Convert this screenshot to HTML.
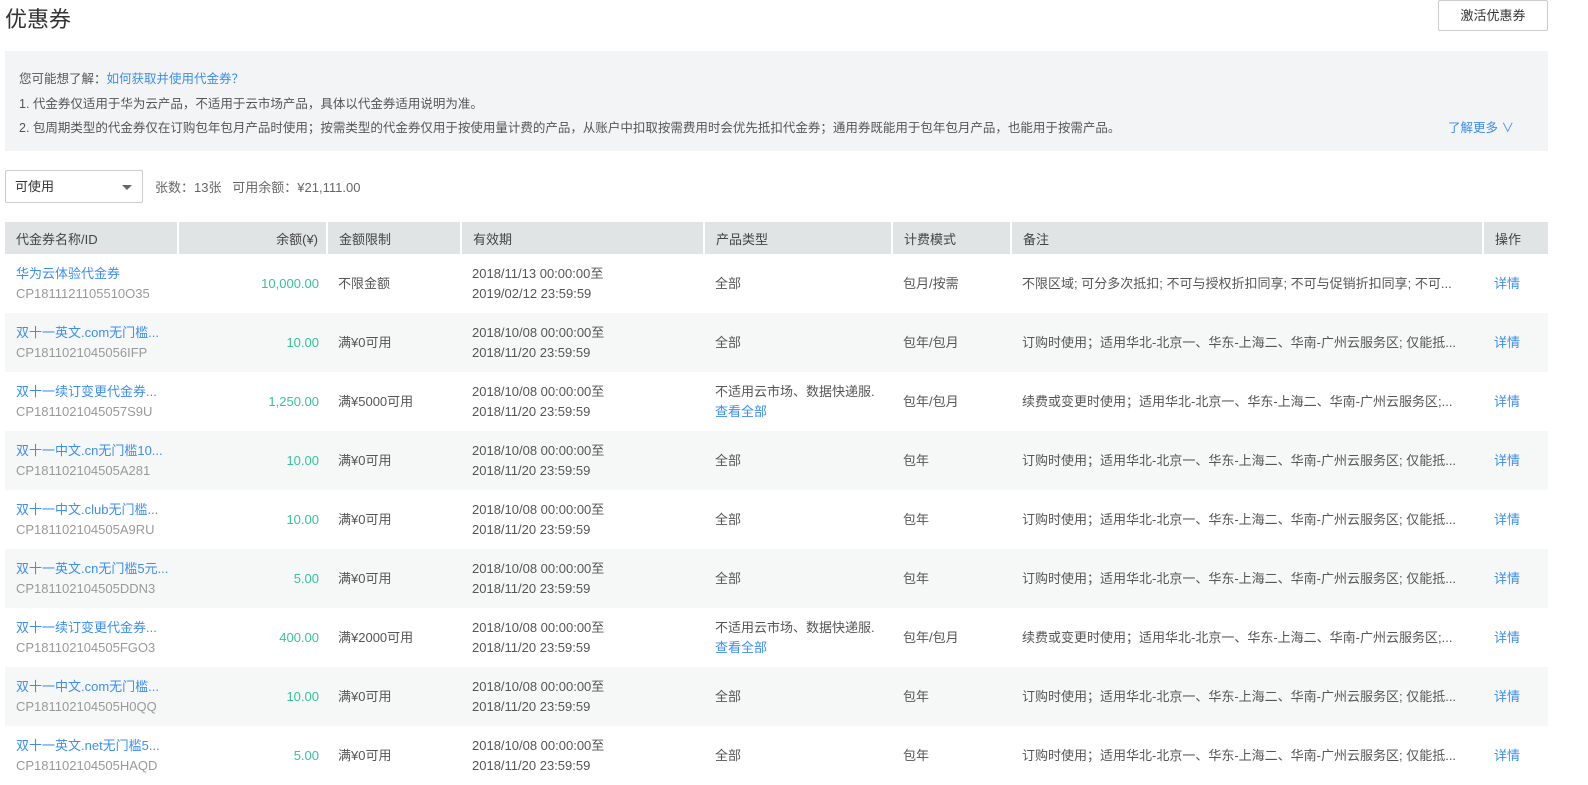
<!DOCTYPE html>
<html style="overflow:hidden"><head><meta charset="utf-8"><style>
*{margin:0;padding:0;box-sizing:border-box}
html,body{width:1588px;height:785px;overflow:hidden}
body{background:#fff;font-family:"Liberation Sans","Noto Sans CJK SC",sans-serif;font-size:13px;color:#555;position:relative}
.title{position:absolute;left:5px;top:2px;font-size:22px;color:#333}
.btn{position:absolute;left:1438px;top:0;width:110px;height:31px;border:1px solid #ccc;border-radius:2px;text-align:center;line-height:30px;color:#333}
.info{position:absolute;left:5px;top:51px;width:1543px;height:100px;background:#f3f4f5}
.info div{position:absolute;left:14px;font-size:12.5px;color:#555}
a{color:#3c8ef0;text-decoration:none}
.sel{position:absolute;left:5px;top:170px;width:138px;height:33px;border:1px solid #ccc;border-radius:2px;padding-left:9px;line-height:31px;color:#333}
.sel:after{content:"";position:absolute;right:10px;top:14px;border:5px solid transparent;border-top-color:#666}
.cnt{position:absolute;left:155px;top:177px;color:#666}
table{position:absolute;left:5px;top:222px;width:1543px;border-collapse:collapse;table-layout:fixed}
th{height:32px;background:#e1e4e5;font-weight:normal;text-align:left;padding-left:11px;color:#444;border-left:2px solid #fff}
th:first-child{border-left:none}
tr.h{height:32px}
tr{height:59px}
td{height:59px;padding-left:11px;line-height:20px;white-space:nowrap;overflow:hidden;color:#555}
tr:nth-child(odd) td{background:#f6f7f7}
.r{text-align:right;padding-right:8px}
.g{color:#36c39c}
.id{color:#999}
</style></head><body>
<div class="title">优惠券</div>
<div class="btn">激活优惠券</div>
<div class="info">
<div style="top:17px">您可能想了解：<a>如何获取并使用代金券？</a></div>
<div style="top:42px">1. 代金券仅适用于华为云产品，不适用于云市场产品，具体以代金券适用说明为准。</div>
<div style="top:66px">2. 包周期类型的代金券仅在订购包年包月产品时使用；按需类型的代金券仅用于按使用量计费的产品，从账户中扣取按需费用时会优先抵扣代金券；通用券既能用于包年包月产品，也能用于按需产品。</div>
<div style="top:66px;left:1443px;color:#3c8ef0">了解更多 ∨</div>
</div>
<div class="sel">可使用</div>
<div class="cnt">张数：13张&nbsp;&nbsp;&nbsp;可用余额：¥21,111.00</div>
<table>
<colgroup><col style="width:173px"><col style="width:149px"><col style="width:134px"><col style="width:243px"><col style="width:188px"><col style="width:119px"><col style="width:472px"><col style="width:65px"></colgroup>
<tr class="h"><th>代金券名称/ID</th><th class="r">余额(¥)</th><th>金额限制</th><th>有效期</th><th>产品类型</th><th>计费模式</th><th>备注</th><th>操作</th></tr>
<tr><td><a>华为云体验代金券</a><br><span class="id">CP1811121105510O35</span></td><td class="r g">10,000.00</td><td>不限金额</td><td>2018/11/13 00:00:00至<br>2019/02/12 23:59:59</td><td>全部</td><td>包月/按需</td><td>不限区域; 可分多次抵扣; 不可与授权折扣同享; 不可与促销折扣同享; 不可...</td><td><a>详情</a></td></tr>
<tr><td><a>双十一英文.com无门槛...</a><br><span class="id">CP1811021045056IFP</span></td><td class="r g">10.00</td><td>满¥0可用</td><td>2018/10/08 00:00:00至<br>2018/11/20 23:59:59</td><td>全部</td><td>包年/包月</td><td>订购时使用；适用华北-北京一、华东-上海二、华南-广州云服务区; 仅能抵...</td><td><a>详情</a></td></tr>
<tr><td><a>双十一续订变更代金券...</a><br><span class="id">CP1811021045057S9U</span></td><td class="r g">1,250.00</td><td>满¥5000可用</td><td>2018/10/08 00:00:00至<br>2018/11/20 23:59:59</td><td>不适用云市场、数据快递服.<br><a>查看全部</a></td><td>包年/包月</td><td>续费或变更时使用；适用华北-北京一、华东-上海二、华南-广州云服务区;...</td><td><a>详情</a></td></tr>
<tr><td><a>双十一中文.cn无门槛10...</a><br><span class="id">CP181102104505A281</span></td><td class="r g">10.00</td><td>满¥0可用</td><td>2018/10/08 00:00:00至<br>2018/11/20 23:59:59</td><td>全部</td><td>包年</td><td>订购时使用；适用华北-北京一、华东-上海二、华南-广州云服务区; 仅能抵...</td><td><a>详情</a></td></tr>
<tr><td><a>双十一中文.club无门槛...</a><br><span class="id">CP181102104505A9RU</span></td><td class="r g">10.00</td><td>满¥0可用</td><td>2018/10/08 00:00:00至<br>2018/11/20 23:59:59</td><td>全部</td><td>包年</td><td>订购时使用；适用华北-北京一、华东-上海二、华南-广州云服务区; 仅能抵...</td><td><a>详情</a></td></tr>
<tr><td><a>双十一英文.cn无门槛5元...</a><br><span class="id">CP181102104505DDN3</span></td><td class="r g">5.00</td><td>满¥0可用</td><td>2018/10/08 00:00:00至<br>2018/11/20 23:59:59</td><td>全部</td><td>包年</td><td>订购时使用；适用华北-北京一、华东-上海二、华南-广州云服务区; 仅能抵...</td><td><a>详情</a></td></tr>
<tr><td><a>双十一续订变更代金券...</a><br><span class="id">CP181102104505FGO3</span></td><td class="r g">400.00</td><td>满¥2000可用</td><td>2018/10/08 00:00:00至<br>2018/11/20 23:59:59</td><td>不适用云市场、数据快递服.<br><a>查看全部</a></td><td>包年/包月</td><td>续费或变更时使用；适用华北-北京一、华东-上海二、华南-广州云服务区;...</td><td><a>详情</a></td></tr>
<tr><td><a>双十一中文.com无门槛...</a><br><span class="id">CP181102104505H0QQ</span></td><td class="r g">10.00</td><td>满¥0可用</td><td>2018/10/08 00:00:00至<br>2018/11/20 23:59:59</td><td>全部</td><td>包年</td><td>订购时使用；适用华北-北京一、华东-上海二、华南-广州云服务区; 仅能抵...</td><td><a>详情</a></td></tr>
<tr><td><a>双十一英文.net无门槛5...</a><br><span class="id">CP181102104505HAQD</span></td><td class="r g">5.00</td><td>满¥0可用</td><td>2018/10/08 00:00:00至<br>2018/11/20 23:59:59</td><td>全部</td><td>包年</td><td>订购时使用；适用华北-北京一、华东-上海二、华南-广州云服务区; 仅能抵...</td><td><a>详情</a></td></tr>
</table>
</body></html>
